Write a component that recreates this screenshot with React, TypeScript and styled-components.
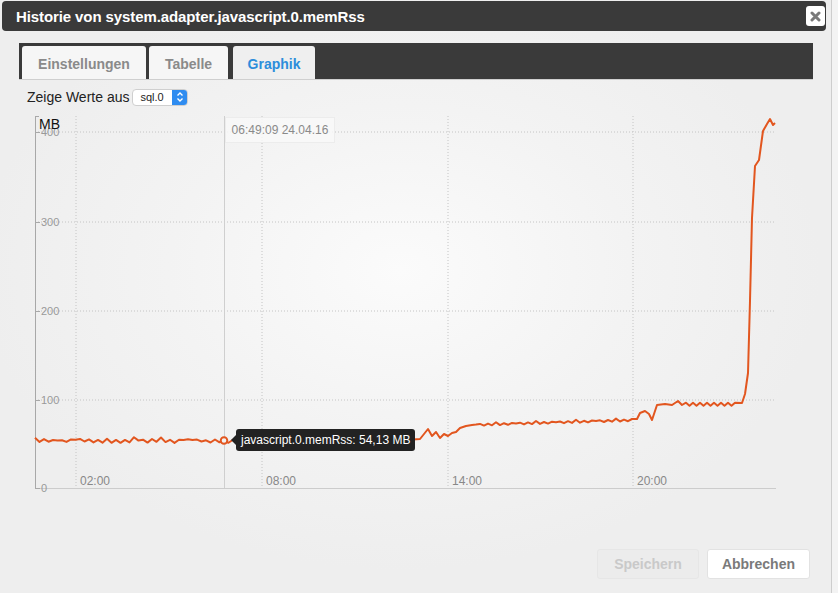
import styled, { createGlobalStyle } from 'styled-components';

const ORANGE = '#e2561f';

const GlobalStyle = createGlobalStyle`
  html, body {
    margin: 0;
    padding: 0;
    background: #f3f3f3;
    font-family: "Liberation Sans", Arial, sans-serif;
  }
`;

// deterministic wobble for the flat parts of the series
let seed = 11;
const rand = () => {
  seed = (seed * 9301 + 49297) % 233280;
  return seed / 233280;
};

const buildSeries = (): [number, number][] => {
  const pts: [number, number][] = [];
  let i = 0;
  for (let x = 35; x <= 416; x += 4.5, i++) {
    const up = i % 2 === 0 ? -1.5 : 1.2;
    pts.push([x, 440 + up + (rand() - 0.5) * 1.6 - (rand() > 0.8 ? 2 : 0)]);
  }
  pts.push([420, 438], [424, 433], [428, 428], [432, 435], [436, 431], [440, 437], [444, 433], [448, 435], [452, 432], [456, 431], [460, 427], [466, 425], [472, 424]);
  i = 0;
  for (let x = 476; x <= 628; x += 4, i++) {
    const base = 424 - (x - 476) * 0.03;
    pts.push([x, base + (i % 2 === 0 ? 0.8 : -1) + (i % 5 === 0 ? -1.2 : 0)]);
  }
  pts.push([632, 418], [637, 418], [640, 412], [645, 410], [649, 413], [652, 419], [657, 404], [665, 403], [672, 404], [678, 400], [682, 404]);
  i = 0;
  for (let x = 686; x <= 738; x += 3.5, i++) {
    pts.push([x, 403.5 + (i % 2 === 0 ? -1.8 : 1.2)]);
  }
  pts.push([742, 402], [745, 393], [748, 372], [750, 300], [752, 217], [755, 165], [759, 159], [763, 130], [767, 123], [770, 118], [773, 124], [775, 122]);
  return pts;
};

const SERIES = buildSeries();

const Y_TICKS = [
  { label: '400', y: 131 },
  { label: '300', y: 221 },
  { label: '200', y: 310 },
  { label: '100', y: 399 },
  { label: '0', y: 487 },
];

const X_TICKS = [
  { label: '02:00', x: 76 },
  { label: '08:00', x: 262 },
  { label: '14:00', x: 448 },
  { label: '20:00', x: 633 },
];

const TABS = [
  { label: 'Einstellungen', width: 124 },
  { label: 'Tabelle', width: 79 },
  { label: 'Graphik', width: 82 },
];

const CloseIcon = () => (
  <svg width="11" height="11" viewBox="0 0 11 11">
    <path d="M2 2 L9 9 M9 2 L2 9" stroke="#7a7a7a" strokeWidth="3" strokeLinecap="round" />
  </svg>
);

const Chevrons = () => (
  <svg width="8" height="12" viewBox="0 0 8 12">
    <path d="M1.5 4.5 L4 2 L6.5 4.5 M1.5 7.5 L4 10 L6.5 7.5" stroke="#fff" strokeWidth="1.4" fill="none" />
  </svg>
);

const Chart = () => {
  const d = SERIES.map(([x, y], i) => `${i ? 'L' : 'M'}${x.toFixed(1)} ${y.toFixed(1)}`).join(' ');
  return (
    <ChartBox>
      <svg width="794" height="390" viewBox="19 110 794 390">
        {Y_TICKS.slice(0, 4).map((t) => (
          <line key={t.label} x1="35" x2="776" y1={t.y} y2={t.y} stroke="#c4c4c4" strokeDasharray="1 2" />
        ))}
        {X_TICKS.map((t) => (
          <line key={t.label} x1={t.x} x2={t.x} y1="115" y2="487" stroke="#c4c4c4" strokeDasharray="1 2" />
        ))}
        <line x1="224.5" x2="224.5" y1="115" y2="487" stroke="#cfcfcf" />
        <line x1="35" x2="776" y1="487.5" y2="487.5" stroke="#cccccc" />
        <line x1="35.5" x2="35.5" y1="115" y2="488" stroke="#a8a8a8" />
        <line x1="35" x2="39" y1="115.5" y2="115.5" stroke="#a8a8a8" />
        {Y_TICKS.map((t) => (
          <g key={t.label}>
            <line x1="35" x2="40" y1={t.y + 0.5} y2={t.y + 0.5} stroke="#a8a8a8" />
            <text x="41" y={t.y + 4} fontSize="11" fill="#999999" fontFamily="Liberation Sans, Arial, sans-serif">
              {t.label}
            </text>
          </g>
        ))}
        <text x="39" y="128" fontSize="14" fill="#111" fontFamily="Liberation Sans, Arial, sans-serif">MB</text>
        {X_TICKS.map((t) => (
          <text key={t.label} x={t.x + 4} y="484" fontSize="12" fill="#888" fontFamily="Liberation Sans, Arial, sans-serif">
            {t.label}
          </text>
        ))}
        <path d={d} fill="none" stroke={ORANGE} strokeWidth="2" strokeLinejoin="round" />
        <circle cx="224" cy="439.5" r="3.3" fill="#f2f2f2" stroke={ORANGE} strokeWidth="2" />
      </svg>
      <TimeTip>06:49:09 24.04.16</TimeTip>
      <ValueTip>javascript.0.memRss: 54,13 MB</ValueTip>
    </ChartBox>
  );
};

export default function App() {
  return (
    <>
      <GlobalStyle />
      <Dialog>
        <TitleBar>
          <Title>Historie von system.adapter.javascript.0.memRss</Title>
          <CloseButton>
            <CloseIcon />
          </CloseButton>
        </TitleBar>
        <Content>
          <TabBar>
            {TABS.map((t) => (
              <Tab key={t.label} $width={t.width} $active={t.label === 'Graphik'}>
                {t.label}
              </Tab>
            ))}
          </TabBar>
          <SourceRow>
            <span>Zeige Werte aus</span>
            <Select>
              <SelectValue>sql.0</SelectValue>
              <SelectArrow>
                <Chevrons />
              </SelectArrow>
            </Select>
          </SourceRow>
          <Chart />
        </Content>
        <Footer>
          <Button $disabled>Speichern</Button>
          <Button>Abbrechen</Button>
        </Footer>
      </Dialog>
    </>
  );
}

const Dialog = styled.div`
  width: 832px;
  height: 593px;
  box-sizing: border-box;
  border-right: 1px solid #cdcdcd;
  background: radial-gradient(ellipse 420px 300px at 400px 270px, #fbfbfb 0%, #f3f3f3 55%, #eeeeee 100%);
  display: flex;
  flex-direction: column;
  overflow: hidden;
`;

const TitleBar = styled.div`
  margin: 1px 5px 0 2px;
  height: 30px;
  background: #3a3a3a;
  border-radius: 4px;
  display: flex;
  align-items: center;
  justify-content: space-between;
  padding: 0 1px 0 14px;
`;

const Title = styled.div`
  color: #fff;
  font-weight: 700;
  font-size: 15px;
  letter-spacing: -0.1px;
`;

const CloseButton = styled.div`
  width: 19px;
  height: 20px;
  background: #fff;
  border-radius: 3px;
  display: grid;
  place-items: center;
`;

const Content = styled.div`
  padding: 12px 19px 0 19px;
  display: flex;
  flex-direction: column;
`;

const TabBar = styled.div`
  width: 794px;
  height: 37px;
  box-sizing: border-box;
  background: #3a3a3a;
  border-bottom: 1px solid #cfcfcf;
  display: flex;
  align-items: flex-end;
  gap: 3px;
  padding-left: 3px;
`;

const Tab = styled.div<{ $width: number; $active?: boolean }>`
  width: ${({ $width }) => $width}px;
  height: 33px;
  box-sizing: border-box;
  padding-top: 3px;
  border-radius: 3px 3px 0 0;
  background: ${({ $active }) => ($active ? '#efefef' : '#f6f6f6')};
  color: ${({ $active }) => ($active ? '#2c8ddb' : '#8a8a8a')};
  font-size: 14px;
  font-weight: 700;
  display: grid;
  place-items: center;
  margin-left: ${({ $active }) => ($active ? '2px' : '0')};
`;

const SourceRow = styled.div`
  display: flex;
  align-items: center;
  gap: 3px;
  margin: 8px 0 0 8px;
  font-size: 14px;
  color: #222;
  height: 18px;
`;

const Select = styled.div`
  width: 56px;
  height: 17px;
  box-sizing: border-box;
  border: 1px solid #cfcfcf;
  border-radius: 4px;
  background: #fff;
  display: flex;
  justify-content: space-between;
  overflow: hidden;
`;

const SelectValue = styled.span`
  font-size: 11px;
  color: #222;
  padding-left: 7px;
  line-height: 15px;
`;

const SelectArrow = styled.span`
  width: 15px;
  background: #2f8cf0;
  display: grid;
  place-items: center;
`;

const ChartBox = styled.div`
  position: relative;
  margin-top: 5px;
  width: 794px;
  height: 390px;
  & > svg {
    display: block;
  }
`;

const TimeTip = styled.div`
  position: absolute;
  left: 206px;
  top: 6px;
  width: 110px;
  height: 26px;
  box-sizing: border-box;
  background: rgba(248, 248, 248, 0.85);
  border: 1px solid #ececec;
  color: #8a8a8a;
  font-size: 12px;
  display: grid;
  place-items: center;
`;

const ValueTip = styled.div`
  position: absolute;
  left: 217px;
  top: 318px;
  height: 22px;
  padding: 0 5px;
  background: #222;
  border-radius: 3px;
  color: #fff;
  font-size: 12px;
  line-height: 22px;

  &::before {
    content: '';
    position: absolute;
    left: -5px;
    top: 6px;
    border: 5px solid transparent;
    border-left: 0;
    border-right-color: #222;
  }
`;

const Footer = styled.div`
  margin-top: auto;
  display: flex;
  justify-content: flex-end;
  gap: 8px;
  padding: 0 21px 14px 0;
`;

const Button = styled.div<{ $disabled?: boolean }>`
  height: 28px;
  padding: 0 ${({ $disabled }) => ($disabled ? '16px' : '14px')};
  border-radius: 3px;
  background: ${({ $disabled }) => ($disabled ? '#ececec' : '#ffffff')};
  border: 1px solid ${({ $disabled }) => ($disabled ? '#e6e6e6' : '#e2e2e2')};
  color: ${({ $disabled }) => ($disabled ? '#c9c9c9' : '#7a7a7a')};
  font-size: 14px;
  font-weight: 700;
  display: grid;
  place-items: center;
`;
